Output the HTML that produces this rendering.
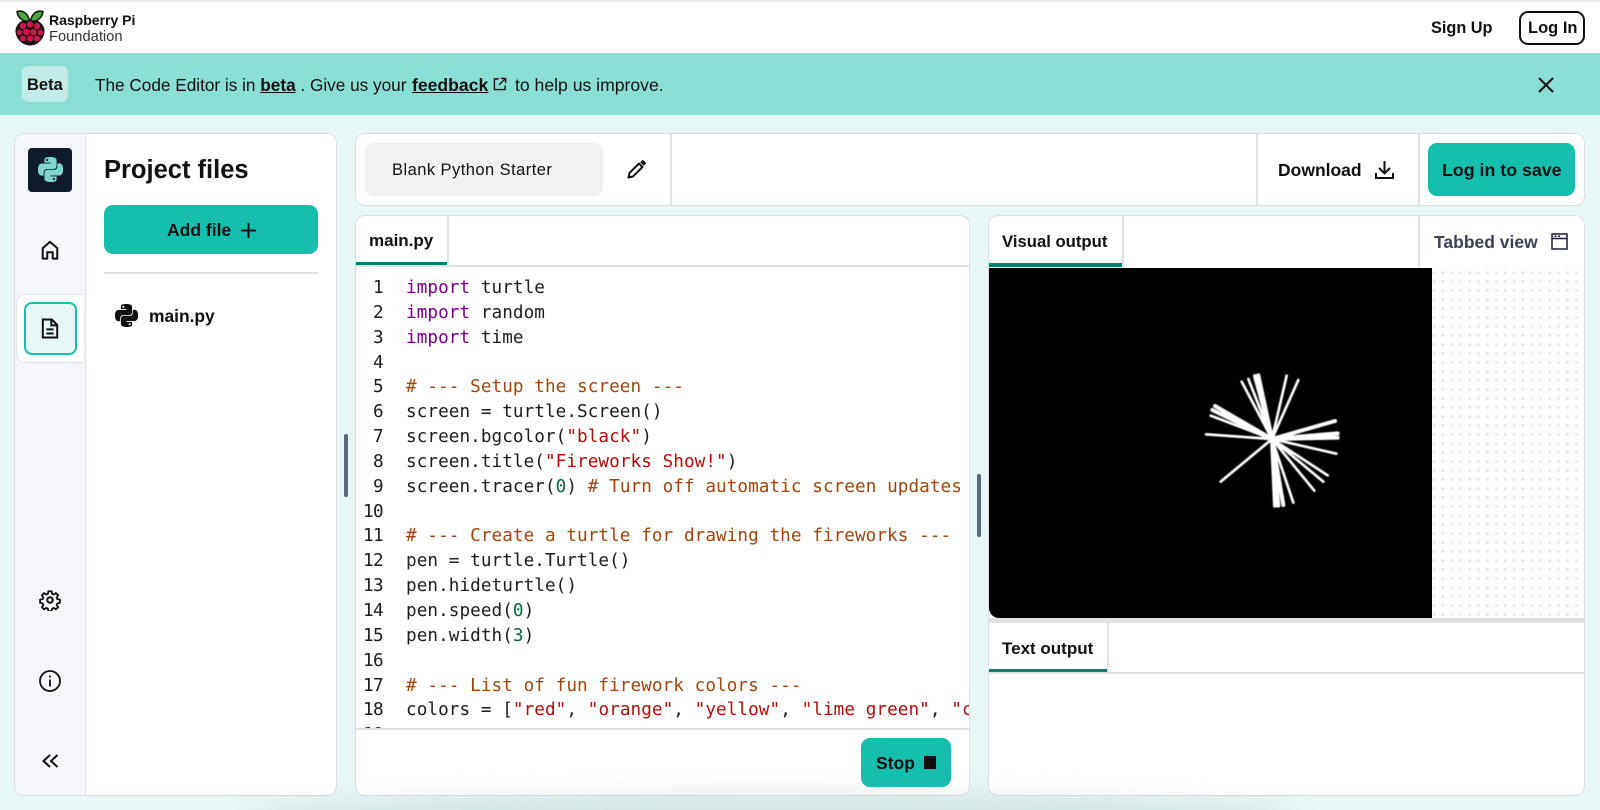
<!DOCTYPE html>
<html lang="en"><head><meta charset="utf-8"><title>Code Editor</title>
<style>
*{box-sizing:border-box}
html{margin:0;padding:0;width:1600px;height:810px;overflow:hidden}
body{margin:0;padding:0;width:1600px;height:810px;overflow:hidden;position:relative;background:#e7f7f6;font-family:"Liberation Sans",sans-serif;color:#111}
.a{position:absolute}
.t{position:absolute;white-space:nowrap;font-weight:700;line-height:20px}
.panel{position:absolute;background:#fff;border:1.5px solid #dcdde3;border-radius:10px;overflow:hidden}
.btn{position:absolute;background:#14bfac;border-radius:9px}
.u{position:absolute;background:#00806f;height:4px}
.code{position:absolute;font:17.67px/24.85px "DejaVu Sans Mono","Liberation Mono",monospace;letter-spacing:.06px;white-space:pre;color:#1c1c1c}
.nums{position:absolute;width:21px;text-align:right;font:17.67px/24.85px "DejaVu Sans Mono",monospace;white-space:pre;color:#1c1c1c;letter-spacing:-.6px}
.k{color:#770088}.c{color:#a0450f}.s{color:#b40d0d}.n{color:#116644}
svg{position:absolute;display:block}
</style></head><body>
<div class="a" style="left:0;top:0;width:1600px;height:53px;background:#fff;border-top:2px solid #e9e9ec"></div>

<svg style="left:14px;top:9px" width="32" height="37" viewBox="0 0 32 37">
<path d="M16 10C23 10 29.500 14 30.500 21 31 29 24 36.500 16 36.500S1 29 1.500 21C2.500 14 9 10 16 10z" fill="#111"/>
<path d="M15.500 12C10 13 4 10 3 2.500 9 1 14 4 15.500 12z" fill="#4aa63f" stroke="#111" stroke-width="1.500" stroke-linejoin="round"/>
<path d="M16.500 12C22 13 28 10 29 2.500 23 1 18 4 16.500 12z" fill="#4aa63f" stroke="#111" stroke-width="1.500" stroke-linejoin="round"/>
<g fill="#c9184a"><circle cx="9" cy="17" r="3.200"/><circle cx="16" cy="15.500" r="3.200"/><circle cx="23" cy="17" r="3.200"/><circle cx="5.500" cy="23.500" r="2.800"/><circle cx="12.500" cy="23" r="3.300"/><circle cx="19.500" cy="23" r="3.300"/><circle cx="26.500" cy="23.500" r="2.800"/><circle cx="9" cy="29.500" r="3"/><circle cx="16" cy="29.500" r="3.200"/><circle cx="23" cy="29.500" r="3"/></g>
</svg>
<div class="t" style="left:49px;top:10px;font-size:14px">Raspberry Pi</div>
<div class="t" style="left:49px;top:27px;font-size:14.700px;font-weight:400;color:#333">Foundation</div>
<div class="t" style="left:1431px;top:18px;font-size:16.300px">Sign Up</div>
<div class="a" style="left:1519px;top:11px;width:66px;height:34px;border:2px solid #111;border-radius:9px"></div>
<div class="t" style="left:1528px;top:18px;font-size:16.500px">Log In</div>

<div class="a" style="left:0;top:53px;width:1600px;height:62px;background:#8adfd5"></div>
<div class="a" style="left:22px;top:66px;width:46px;height:36px;background:#c3ece8;border-radius:7px"></div>
<div class="t" style="left:27px;top:75px;font-size:16.500px">Beta</div>
<div class="t" style="left:95px;top:75px;font-size:17.200px;font-weight:400">The Code Editor is in <b style="text-decoration:underline">beta</b> . Give us your</div>
<div class="t" style="left:412px;top:75px;font-size:17.600px;text-decoration:underline">feedback</div>
<svg style="left:493px;top:77px" width="14" height="14" viewBox="0 0 15 15" fill="none" stroke="#111" stroke-width="1.500"><path d="M6 2H1.500v11.500H13V9M8.500 1.500h5v5M13.500 1.500L6.500 8.500"/></svg>
<div class="t" style="left:515px;top:75px;font-size:17.600px;font-weight:400">to help us improve.</div>
<svg style="left:1538px;top:77px" width="16" height="16" viewBox="0 0 16 16" stroke="#111" stroke-width="2"><path d="M1 1l14 14M15 1L1 15"/></svg>

<div class="panel" style="left:14px;top:133px;width:323px;height:663px"></div>
<div class="a" style="left:15px;top:134px;width:71px;height:661px;background:#f5f6f9;border-right:1.500px solid #e2e3e8;border-radius:9px 0 0 9px"></div>
<div class="a" style="left:28px;top:148px;width:44px;height:44px;background:#0f1a2b;border-radius:4px"></div>
<svg style="left:38px;top:157px" width="25" height="25" viewBox="0 0 24 24" fill="#7fd6cc"><path d="M14.250.18l.9.2.73.26.59.3.45.32.34.34.25.34.16.33.1.3.04.26.02.2-.01.13V8.500l-.05.63-.13.55-.21.46-.26.38-.3.31-.33.25-.35.19-.35.14-.33.1-.3.07-.26.04-.21.02H8.770l-.69.05-.59.14-.5.22-.41.27-.33.32-.27.35-.2.36-.15.37-.1.35-.07.32-.04.27-.02.21v3.060H3.170l-.21-.03-.28-.07-.32-.12-.35-.18-.36-.26-.36-.36-.35-.46-.32-.59-.28-.73-.21-.88-.14-1.050-.05-1.230.06-1.220.16-1.040.24-.87.32-.71.36-.57.4-.44.42-.33.42-.24.4-.16.36-.1.32-.05.24-.01h.16l.06.01h8.160v-.83H6.180l-.01-2.750-.02-.37.05-.34.11-.31.17-.28.25-.26.31-.23.38-.2.44-.18.51-.15.58-.12.64-.1.71-.06.77-.04.84-.02 1.270.05zm-6.300 1.980l-.23.33-.08.41.08.41.23.34.33.22.41.09.41-.09.33-.22.23-.34.08-.41-.08-.41-.23-.33-.33-.22-.41-.09-.41.09zm13.090 3.950l.28.06.32.12.35.18.36.27.36.35.35.47.32.59.28.73.21.88.14 1.040.05 1.230-.06 1.230-.16 1.040-.24.86-.32.71-.36.57-.4.45-.42.33-.42.24-.4.16-.36.09-.32.05-.24.02-.16-.01h-8.220v.82h5.840l.01 2.760.02.36-.05.34-.11.31-.17.29-.25.25-.31.24-.38.2-.44.17-.51.15-.58.13-.64.09-.71.07-.77.04-.84.01-1.270-.04-1.070-.14-.9-.2-.73-.25-.59-.3-.45-.33-.34-.34-.25-.34-.16-.33-.1-.3-.04-.25-.02-.2.01-.13v-5.340l.05-.64.13-.54.21-.46.26-.38.3-.32.33-.24.35-.2.35-.14.33-.1.3-.06.26-.04.21-.02.13-.01h5.840l.69-.05.59-.14.5-.21.41-.28.33-.32.27-.35.2-.36.15-.36.1-.35.07-.32.04-.28.02-.21V6.070h2.090l.14.01zm-6.470 14.250l-.23.33-.08.41.08.41.23.33.33.23.41.08.41-.08.33-.23.23-.33.08-.41-.08-.41-.23-.33-.33-.23-.41-.08-.41.08z"/></svg>
<svg style="left:40px;top:239px" width="20" height="22" viewBox="0 0 22 22" fill="none" stroke="#111" stroke-width="2.200"><path d="M3 20.500V9l8-7 8 7v11.500h-5v-7H8v7z" stroke-linejoin="round"/></svg>
<div class="a" style="left:16px;top:294px;width:67px;height:69px;background:#fff;border:1.500px solid #e2e3e8;border-right:0;border-radius:9px 0 0 9px"></div>
<div class="a" style="left:24px;top:302px;width:53px;height:53px;background:#e7f7f6;border:2px solid #14bfac;border-radius:8px"></div>
<svg style="left:41px;top:318px" width="18" height="21" viewBox="0 0 20 23" fill="none" stroke="#111" stroke-width="2.200"><path d="M2 1.500h10l6 6v14H2zM11.500 1.500v6.500H18M6 12.500h8M6 17h8"/></svg>
<svg style="left:39px;top:589px" width="22" height="22" viewBox="0 0 24 24" fill="none" stroke="#111" stroke-width="2.200" stroke-linejoin="round"><circle cx="12" cy="12" r="3"/><path d="M10 1.500h4l.6 3.100 1.900.8 2.600-1.800 2.800 2.800-1.800 2.600.8 1.900 3.100.6v4l-3.100.6-.8 1.900 1.800 2.600-2.800 2.800-2.600-1.800-1.900.8-.6 3.100h-4l-.6-3.100-1.900-.8-2.600 1.800-2.800-2.800 1.800-2.600-.8-1.900-3.100-.6v-4l3.100-.6.8-1.900L2.100 6.400l2.800-2.800 2.600 1.800 1.900-.8z" transform="translate(1.200 1.200) scale(.9)"/></svg>
<svg style="left:39px;top:670px" width="22" height="22" viewBox="0 0 22 22" fill="none" stroke="#111" stroke-width="1.800"><circle cx="11" cy="11" r="10"/><path d="M11 9.500v7M11 5.500v2"/></svg>
<svg style="left:42px;top:754px" width="17" height="14" viewBox="0 0 17 14" fill="none" stroke="#111" stroke-width="2"><path d="M8 1L1.500 7 8 13M15.500 1L9 7l6.500 6"/></svg>

<div class="t" style="left:104px;top:157px;font-size:25.500px;line-height:26px">Project files</div>
<div class="btn" style="left:104px;top:205px;width:214px;height:49px"></div>
<div class="t" style="left:167px;top:220px;font-size:17.500px">Add file</div>
<svg style="left:240px;top:222px" width="17" height="17" viewBox="0 0 17 17" stroke="#111" stroke-width="2"><path d="M8.500 1v15M1 8.500h15"/></svg>
<div class="a" style="left:104px;top:272px;width:214px;height:1.500px;background:#e2e3e8"></div>
<svg style="left:115px;top:304px" width="23" height="23" viewBox="0 0 24 24" fill="#111"><path d="M14.250.18l.9.2.73.26.59.3.45.32.34.34.25.34.16.33.1.3.04.26.02.2-.01.13V8.500l-.05.63-.13.55-.21.46-.26.38-.3.31-.33.25-.35.19-.35.14-.33.1-.3.07-.26.04-.21.02H8.770l-.69.05-.59.14-.5.22-.41.27-.33.32-.27.35-.2.36-.15.37-.1.35-.07.32-.04.27-.02.21v3.060H3.170l-.21-.03-.28-.07-.32-.12-.35-.18-.36-.26-.36-.36-.35-.46-.32-.59-.28-.73-.21-.88-.14-1.050-.05-1.230.06-1.220.16-1.040.24-.87.32-.71.36-.57.4-.44.42-.33.42-.24.4-.16.36-.1.32-.05.24-.01h.16l.06.01h8.160v-.83H6.180l-.01-2.750-.02-.37.05-.34.11-.31.17-.28.25-.26.31-.23.38-.2.44-.18.51-.15.58-.12.64-.1.71-.06.77-.04.84-.02 1.270.05zm-6.300 1.980l-.23.33-.08.41.08.41.23.34.33.22.41.09.41-.09.33-.22.23-.34.08-.41-.08-.41-.23-.33-.33-.22-.41-.09-.41.09zm13.090 3.950l.28.06.32.12.35.18.36.27.36.35.35.47.32.59.28.73.21.88.14 1.040.05 1.230-.06 1.230-.16 1.040-.24.86-.32.71-.36.57-.4.45-.42.33-.42.24-.4.16-.36.09-.32.05-.24.02-.16-.01h-8.220v.82h5.840l.01 2.760.02.36-.05.34-.11.31-.17.29-.25.25-.31.24-.38.2-.44.17-.51.15-.58.13-.64.09-.71.07-.77.04-.84.01-1.270-.04-1.070-.14-.9-.2-.73-.25-.59-.3-.45-.33-.34-.34-.25-.34-.16-.33-.1-.3-.04-.25-.02-.2.01-.13v-5.340l.05-.64.13-.54.21-.46.26-.38.3-.32.33-.24.35-.2.35-.14.33-.1.3-.06.26-.04.21-.02.13-.01h5.840l.69-.05.59-.14.5-.21.41-.28.33-.32.27-.35.2-.36.15-.36.1-.35.07-.32.04-.28.02-.21V6.070h2.090l.14.01zm-6.470 14.250l-.23.33-.08.41.08.41.23.33.33.23.41.08.41-.08.33-.23.23-.33.08-.41-.08-.41-.23-.33-.33-.23-.41-.08-.41.08z"/></svg>
<div class="t" style="left:149px;top:306px;font-size:17.400px">main.py</div>
<div class="a" style="left:344px;top:434px;width:4px;height:63px;background:#5b6a7b;border-radius:2px"></div>

<div class="panel" style="left:355px;top:133px;width:1230px;height:73px"></div>
<div class="a" style="left:365px;top:143px;width:238px;height:53px;background:#f0f1f3;border-radius:9px"></div>
<div class="t" style="left:392px;top:160px;font-size:16.500px;font-weight:400;letter-spacing:.45px">Blank Python Starter</div>
<svg style="left:627px;top:159px" width="20" height="20" viewBox="0 0 20 20" fill="none" stroke="#111" stroke-width="2"><path d="M1.500 18.500l1-4.500L12 4.500l3.500 3.500L6 17.500z" stroke-linejoin="round"/><path d="M14.500 2l3.500 3.500" stroke-width="3.500"/></svg>
<div class="a" style="left:670px;top:134px;width:1.500px;height:71px;background:#e2e3e8"></div>
<div class="a" style="left:1256px;top:134px;width:1.500px;height:71px;background:#e2e3e8"></div>
<div class="a" style="left:1418px;top:134px;width:1.500px;height:71px;background:#e2e3e8"></div>
<div class="t" style="left:1278px;top:160px;font-size:17.500px">Download</div>
<svg style="left:1375px;top:160px" width="19" height="19" viewBox="0 0 19 19" fill="none" stroke="#111" stroke-width="2"><path d="M9.500 1v12M4 8l5.500 5.500L15 8M1 13v5h17v-5"/></svg>
<div class="btn" style="left:1428px;top:143px;width:147px;height:53px"></div>
<div class="t" style="left:1442px;top:160px;font-size:17.800px">Log in to save</div>

<div class="panel" style="left:355px;top:215px;width:615px;height:581px"></div>
<div class="a" style="left:447px;top:216px;width:1.500px;height:49px;background:#e2e3e8"></div>
<div class="t" style="left:369px;top:231px;font-size:17px">main.py</div>
<div class="u" style="left:356px;top:262px;width:91px"></div>
<div class="a" style="left:356px;top:265px;width:613px;height:1.500px;background:#e2e3e8"></div>
<div class="a" style="left:356px;top:266px;width:613px;height:462px;overflow:hidden">
<div class="nums" style="left:6px;top:10px">1
2
3
4
5
6
7
8
9
10
11
12
13
14
15
16
17
18
19</div>
<div class="code" style="left:50px;top:10px"><span class="k">import</span> turtle
<span class="k">import</span> random
<span class="k">import</span> time

<span class="c"># --- Setup the screen ---</span>
screen = turtle.Screen()
screen.bgcolor(<span class="s">"black"</span>)
screen.title(<span class="s">"Fireworks Show!"</span>)
screen.tracer(<span class="n">0</span>) <span class="c"># Turn off automatic screen updates</span>

<span class="c"># --- Create a turtle for drawing the fireworks ---</span>
pen = turtle.Turtle()
pen.hideturtle()
pen.speed(<span class="n">0</span>)
pen.width(<span class="n">3</span>)

<span class="c"># --- List of fun firework colors ---</span>
colors = [<span class="s">"red"</span>, <span class="s">"orange"</span>, <span class="s">"yellow"</span>, <span class="s">"lime green"</span>, <span class="s">"cyan"</span>, <span class="s">"magenta"</span>]
</div>
</div>
<div class="a" style="left:356px;top:728px;width:613px;height:1.500px;background:#e2e3e8"></div>
<div class="btn" style="left:861px;top:738px;width:90px;height:49px"></div>
<div class="t" style="left:876px;top:753px;font-size:17.500px">Stop</div>
<div class="a" style="left:924px;top:756px;width:12px;height:13px;background:#111"></div>
<div class="a" style="left:977px;top:474px;width:4px;height:63px;background:#5b6a7b;border-radius:2px"></div>

<div class="panel" style="left:988px;top:215px;width:597px;height:581px"></div>
<div class="a" style="left:1122px;top:216px;width:1.500px;height:51px;background:#e2e3e8"></div>
<div class="a" style="left:1418px;top:216px;width:1.500px;height:51px;background:#e2e3e8"></div>
<div class="t" style="left:1002px;top:232px;font-size:16.700px">Visual output</div>
<div class="u" style="left:989px;top:263px;width:133px"></div>
<div class="t" style="left:1434px;top:232px;font-size:17.500px;color:#3c4056">Tabbed view</div>
<svg style="left:1551px;top:233px" width="17" height="17" viewBox="0 0 17 17" fill="none" stroke="#1a1f3a" stroke-width="1.500"><path d="M1 1h15v15H1zM1 5.500h15M3.500 3.300h2M7 3.300h2"/></svg>
<div class="a" style="left:1432px;top:267px;width:152px;height:351px;background-color:#fff;background-image:radial-gradient(circle,#dedfe3 1px,transparent 1.400px);background-size:8.900px 9px;background-position:-2.500px 1px"></div>
<div class="a" style="left:989px;top:268px;width:443px;height:350px;background:#000;border-radius:0 0 0 10px"></div>
<svg style="left:1180px;top:350px;filter:blur(.4px)" width="180" height="170" viewBox="0 0 540 510" stroke="#fff" stroke-linecap="round">
<g stroke-width="8"><path d="M276 267L185 95M276 267L205 87M276 267L320 77M276 267L355 90M276 267L92 197M276 267L78 253M276 267L122 395M276 267L469 311M276 267L443 376M276 267L430 395M276 267L403 422M276 267L340 458"/></g>
<g stroke-width="12"><path d="M276 267L225 78M276 267L235 76M276 267L105 168M276 267L97 180M276 267L465 213M276 267L473 250M276 267L473 263M276 267L310 465M276 267L295 467M276 267L285 467"/></g>
</svg>
<div class="a" style="left:989px;top:618px;width:595px;height:5px;background:#e0e1e5"></div>
<div class="t" style="left:1002px;top:639px;font-size:17px">Text output</div>
<div class="a" style="left:1107px;top:623px;width:1.500px;height:49px;background:#e2e3e8"></div>
<div class="u" style="left:989px;top:669px;width:118px"></div>
<div class="a" style="left:989px;top:672px;width:595px;height:1.500px;background:#e2e3e8"></div>

<div class="a" style="left:240px;top:792px;width:1060px;height:50px;background:#8aa09d;opacity:.2;filter:blur(12px);border-radius:50%"></div>
</body></html>
